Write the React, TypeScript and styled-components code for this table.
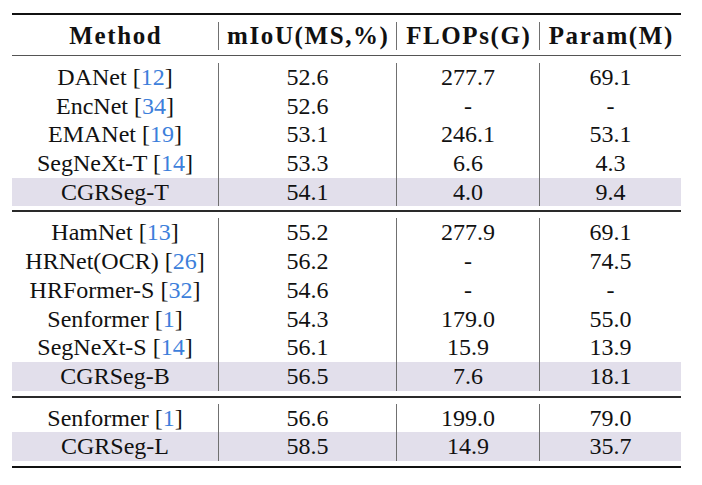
import React from 'react'
import styled, { createGlobalStyle } from 'styled-components'

type Row = { method: string; cite?: string; miou: string; flops: string; param: string; ours?: boolean }

const groups: Row[][] = [
    [
        { method: 'DANet', cite: '12', miou: '52.6', flops: '277.7', param: '69.1' },
        { method: 'EncNet', cite: '34', miou: '52.6', flops: '-', param: '-' },
        { method: 'EMANet', cite: '19', miou: '53.1', flops: '246.1', param: '53.1' },
        { method: 'SegNeXt-T', cite: '14', miou: '53.3', flops: '6.6', param: '4.3' },
        { method: 'CGRSeg-T', miou: '54.1', flops: '4.0', param: '9.4', ours: true },
    ],
    [
        { method: 'HamNet', cite: '13', miou: '55.2', flops: '277.9', param: '69.1' },
        { method: 'HRNet(OCR)', cite: '26', miou: '56.2', flops: '-', param: '74.5' },
        { method: 'HRFormer-S', cite: '32', miou: '54.6', flops: '-', param: '-' },
        { method: 'Senformer', cite: '1', miou: '54.3', flops: '179.0', param: '55.0' },
        { method: 'SegNeXt-S', cite: '14', miou: '56.1', flops: '15.9', param: '13.9' },
        { method: 'CGRSeg-B', miou: '56.5', flops: '7.6', param: '18.1', ours: true },
    ],
    [
        { method: 'Senformer', cite: '1', miou: '56.6', flops: '199.0', param: '79.0' },
        { method: 'CGRSeg-L', miou: '58.5', flops: '14.9', param: '35.7', ours: true },
    ],
]

function App() {
    return (
        <Page>
            <GlobalStyle />
            <Table>
                <Rule $weight={2} $color="#111" />
                <HeadBlock>
                    <Line>
                        <HeadCell>Method</HeadCell>
                        <HeadCell $sep>mIoU(MS,%)</HeadCell>
                        <HeadCell $sep>FLOPs(G)</HeadCell>
                        <HeadCell $sep>Param(M)</HeadCell>
                    </Line>
                </HeadBlock>
                <Rule $weight={1} $color="#555" />
                {groups.map((g, gi) => (
                    <React.Fragment key={gi}>
                        <Group $first={gi === 0}>
                            {g.map((r) => (
                                <Line key={r.method + r.miou} $ours={r.ours}>
                                    <Cell>
                                        {r.method}
                                        {r.cite && (
                                            <>
                                                {' ['}
                                                <Cite>{r.cite}</Cite>
                                                {']'}
                                            </>
                                        )}
                                    </Cell>
                                    <Cell $sep>{r.miou}</Cell>
                                    <Cell $sep>{r.flops}</Cell>
                                    <Cell $sep>{r.param}</Cell>
                                </Line>
                            ))}
                        </Group>
                        <Rule $weight={2} $color={gi < groups.length - 1 ? '#2a2a2a' : '#111'} />
                    </React.Fragment>
                ))}
            </Table>
        </Page>
    )
}

const GlobalStyle = createGlobalStyle`
    html, body {
        margin: 0;
        padding: 0;
        background: #fff;
    }
`;
const Page = styled.div`
    width: 702px;
    height: 485px;
    padding: 13px 0 0 12px;
    box-sizing: border-box;
    font-family: "Liberation Serif", "Times New Roman", serif;
    color: #111;
`;
const Table = styled.div`
    display: flex;
    flex-direction: column;
    width: 669px;
`;
const Rule = styled.div<{ $weight: number; $color: string }>`
    height: ${(p) => p.$weight}px;
    background: ${(p) => p.$color};
`;
const HeadBlock = styled.div`
    padding: 7px 0 5px;
`;
const Group = styled.div<{ $first?: boolean }>`
    padding: ${(p) => (p.$first ? '7px 0 4px' : '6px 0 5px')};
`;
const Line = styled.div<{ $ours?: boolean }>`
    display: grid;
    grid-template-columns: 206px 178px 143px 142px;
    background: ${(p) => (p.$ours ? '#e2dfeb' : 'transparent')};
`;
const Cell = styled.div<{ $sep?: boolean }>`
    height: 28.7px;
    line-height: 28.7px;
    font-size: 24px;
    text-align: center;
    white-space: nowrap;
    border-left: ${(p) => (p.$sep ? '1px solid #707070' : 'none')};
`;
const HeadCell = styled(Cell)`
    height: 28px;
    line-height: 28px;
    padding-left: 1.6px;
    font-weight: bold;
    font-size: 25px;
    letter-spacing: 1.6px;
`;
const Cite = styled.span`
    color: #3d7fdb;
`;

export default App
